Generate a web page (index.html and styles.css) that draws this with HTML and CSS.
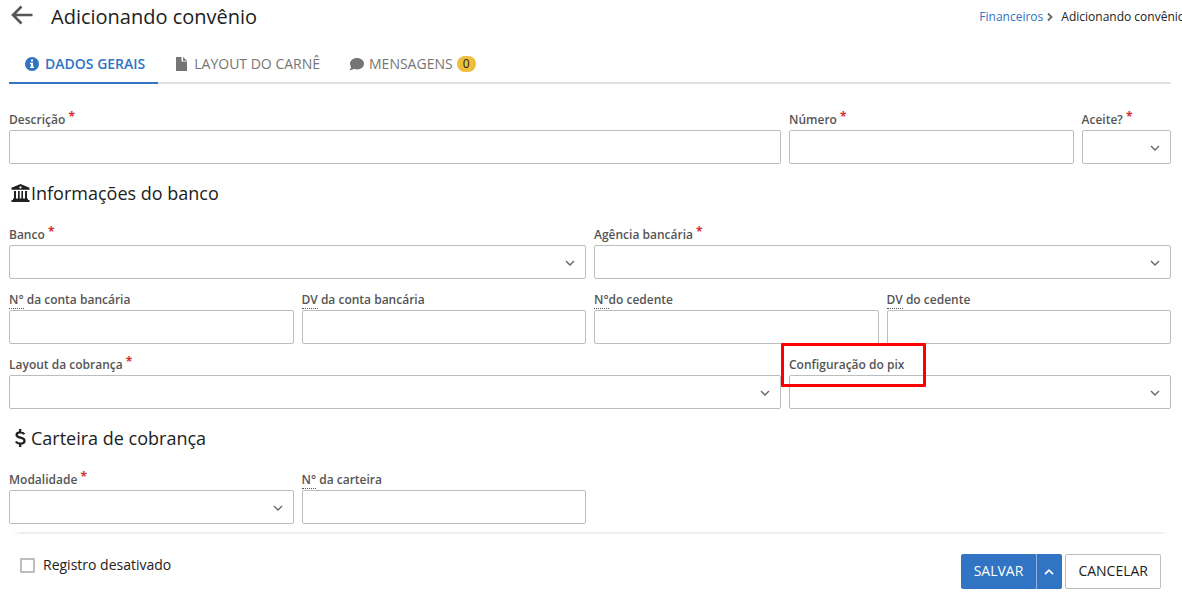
FILE: index.html
```html
<!DOCTYPE html>
<html lang="pt-BR">
<head>
<meta charset="utf-8">
<meta name="viewport" content="width=device-width, initial-scale=1">
<title>Adicionando convênio</title>
<link rel="stylesheet" href="styles.css">
</head>
<body>
<svg class="sprite" aria-hidden="true">
  <symbol id="chevron" viewBox="0 0 10 6"><path d="M1 1l4 4 4-4" fill="none" stroke="currentColor" stroke-width="1.400"/></symbol>
</svg>
<header class="page-header">
  <button class="back" type="button" aria-label="Voltar">
    <svg width="22" height="20" viewBox="0 0 22 20"><path d="M10.500 1.500L2 10l8.500 8.500M2 10h19.500" fill="none" stroke="currentColor" stroke-width="2.600"/></svg>
  </button>
  <h1 class="page-title">Adicionando convênio</h1>
  <nav class="breadcrumb" aria-label="Trilha">
    <a href="#">Financeiros</a>
    <svg width="6" height="10" viewBox="0 0 6 10"><path d="M1 1.500L4.500 5 1 8.500" fill="none" stroke="currentColor" stroke-width="1.800"/></svg>
    <span>Adicionando convênio</span>
  </nav>
</header>

<main class="content">
  <nav class="tabs">
    <button class="tab tab-active" type="button">
      <svg class="tab-icon" viewBox="0 0 16 16"><circle cx="7" cy="8" r="7" fill="currentColor"/><path d="M6 3.500h2v2H6zM5 6.800h3v3.700h1V12H5v-1.500h1V8.200H5z" fill="#fff"/></svg>
      <span>DADOS GERAIS</span>
    </button>
    <button class="tab" type="button">
      <svg class="tab-icon" viewBox="0 0 16 16"><path d="M2.500 1h5v4.500H13v9q0 .5-.5.500h-10q-.5 0-.5-.5v-13q0-.5.500-.5zM9 1l4 3.700H9z" fill="currentColor"/></svg>
      <span>LAYOUT DO CARNÊ</span>
    </button>
    <button class="tab" type="button">
      <svg class="tab-icon" viewBox="0 0 16 16"><path d="M8 2c4 0 7 2.500 7 5.700s-3 5.700-7 5.700c-1.100 0-2.200-.2-3.100-.6-.9.700-2.400 1.400-4 1.400-.3 0-.4-.3-.2-.6.600-.6 1.200-1.600 1.400-2.600C1.400 10.100 1 8.900 1 7.700 1 4.500 4 2 8 2z" fill="currentColor"/></svg>
      <span>MENSAGENS</span>
      <span class="badge">0</span>
    </button>
  </nav>

  <form class="form">
    <section class="grid">
      <div class="field span-8"><label for="descricao">Descrição <b class="req">*</b></label><input class="control" id="descricao" type="text"></div>
      <div class="field span-3"><label for="numero">Número <b class="req">*</b></label><input class="control" id="numero" type="text"></div>
      <div class="field span-1"><label for="aceite">Aceite? <b class="req">*</b></label><div class="select"><select class="control" id="aceite"><option></option></select><svg class="caret"><use href="#chevron"/></svg></div></div>
    </section>

    <h2 class="section-title">
      <svg class="section-icon" viewBox="0 0 22 20"><path d="M11.500 0L2.500 3.800v1.900h18V3.800zM4 16v-1.500h1V7h2v7.500h2V7h1.700v7.500h1.700V7H14v7.500h2V7h2v7.500h1V16h1.500v2h-18v-2z" fill="currentColor"/><circle cx="11.500" cy="3.400" r="1.100" fill="#fff"/></svg>
      <span>Informações do banco</span>
    </h2>

    <section class="grid">
      <div class="field span-6"><label for="banco">Banco <b class="req">*</b></label><div class="select"><select class="control" id="banco"><option></option></select><svg class="caret"><use href="#chevron"/></svg></div></div>
      <div class="field span-6"><label for="agencia">Agência bancária <b class="req">*</b></label><div class="select"><select class="control" id="agencia"><option></option></select><svg class="caret"><use href="#chevron"/></svg></div></div>
      <div class="field span-3"><label for="conta"><abbr>N°</abbr> da conta bancária</label><input class="control" id="conta" type="text"></div>
      <div class="field span-3"><label for="dv-conta"><abbr>DV</abbr> da conta bancária</label><input class="control" id="dv-conta" type="text"></div>
      <div class="field span-3"><label for="cedente"><abbr>N°</abbr>do cedente</label><input class="control" id="cedente" type="text"></div>
      <div class="field span-3"><label for="dv-cedente"><abbr>DV</abbr> do cedente</label><input class="control" id="dv-cedente" type="text"></div>
      <div class="field span-8"><label for="layout">Layout da cobrança <b class="req">*</b></label><div class="select"><select class="control" id="layout"><option></option></select><svg class="caret"><use href="#chevron"/></svg></div></div>
      <div class="field span-4 highlighted"><label for="pix">Configuração do pix</label><div class="select"><select class="control" id="pix"><option></option></select><svg class="caret"><use href="#chevron"/></svg></div></div>
    </section>

    <h2 class="section-title">
      <svg class="section-icon" viewBox="0 0 22 20"><path d="M15.300 5.300C14.600 4 13.200 3.400 11.300 3.400c-2.200 0-3.700 1-3.700 2.600 0 3.700 7.900 1.700 7.900 5.700 0 1.800-1.700 2.900-4.100 2.900-2.100 0-3.700-.7-4.600-2.100M11.200 0v3.400M11.200 14.500V18" fill="none" stroke="currentColor" stroke-width="2.300"/></svg>
      <span>Carteira de cobrança</span>
    </h2>

    <section class="grid">
      <div class="field span-3"><label for="modalidade">Modalidade <b class="req">*</b></label><div class="select"><select class="control" id="modalidade"><option></option></select><svg class="caret"><use href="#chevron"/></svg></div></div>
      <div class="field span-3"><label for="carteira"><abbr>N°</abbr> da carteira</label><input class="control" id="carteira" type="text"></div>
    </section>

    <footer class="actions">
      <label class="check"><input type="checkbox"><span>Registro desativado</span></label>
      <div class="buttons">
        <div class="split">
          <button class="btn btn-primary" type="button">SALVAR</button>
          <button class="btn btn-primary btn-more" type="button" aria-label="Mais opções"><svg width="10" height="6" viewBox="0 0 10 6"><path d="M1 5.200l4-4 4 4" fill="none" stroke="currentColor" stroke-width="1.700"/></svg></button>
        </div>
        <button class="btn btn-plain" type="button">CANCELAR</button>
      </div>
    </footer>
  </form>
</main>
</body>
</html>
```
FILE: styles.css
```css
* { box-sizing: border-box; }

body {
  margin: 0;
  overflow-x: hidden;
  background: #fff;
  color: #212121;
  font: 14px/20px "Open Sans", sans-serif;
}

button, input, select { font: inherit; color: inherit; }
button { cursor: pointer; }
.sprite { display: none; }

/* Header */
.page-header {
  display: flex;
  align-items: center;
  height: 34px;
  padding-left: 11px;
}
.back {
  display: flex;
  margin: 0 18px 4px 0;
  padding: 0;
  border: 0;
  background: none;
  color: #555;
}
.page-title {
  margin: 0;
  font-size: 20px;
  line-height: 28px;
  font-weight: 400;
}
.breadcrumb {
  display: flex;
  align-items: center;
  gap: 4px;
  margin: 0 -3px 0 auto;
  font-size: 12px;
  line-height: 16px;
  white-space: nowrap;
}
.breadcrumb a { color: #3174c3; text-decoration: none; }
.breadcrumb svg { color: #666; }
.breadcrumb span { margin-left: 4px; }

.content { padding: 12px 11px 0 9px; }

/* Tabs */
.tabs {
  display: flex;
  border-bottom: 2px solid #e0e0e4;
}
.tab {
  display: flex;
  align-items: center;
  gap: 4px;
  height: 38px;
  margin-bottom: -2px;
  padding: 0 13px 0 16px;
  border: 0;
  border-bottom: 2px solid transparent;
  background: none;
  color: #757575;
}
.tab-active {
  border-color: #3174c3;
  color: #3174c3;
  font-weight: 600;
}
.tab-icon { width: 16px; height: 16px; }
.badge {
  min-width: 19px;
  border-radius: 8px;
  background: #f0bd3b;
  color: #212121;
  font-size: 12px;
  line-height: 16px;
  text-align: center;
}

/* Form */
.form { padding-top: 28px; }
.grid {
  display: grid;
  grid-template-columns: repeat(12, minmax(0, 1fr));
  gap: 13px 8px;
}
.span-1 { grid-column: span 1; }
.span-3 { grid-column: span 3; }
.span-4 { grid-column: span 4; }
.span-6 { grid-column: span 6; }
.span-8 { grid-column: span 8; }

.field {
  display: flex;
  flex-direction: column;
  gap: 2px;
}
.field label {
  height: 16px;
  color: #555;
  font-size: 12px;
  line-height: 16px;
  font-weight: 600;
  white-space: nowrap;
}
.field abbr {
  border-bottom: 1px dotted #555;
  text-decoration: none;
}
.req {
  color: #d32f2f;
  font-weight: 700;
  line-height: 0;
  vertical-align: 3px;
}
.control {
  width: 100%;
  height: 34px;
  padding: 0 8px;
  border: 1px solid #bdbdbd;
  border-radius: 2px;
  background: #fff;
  appearance: none;
}
.select { display: grid; align-items: center; }
.select > * { grid-area: 1 / 1; }
.caret {
  width: 10px;
  height: 6px;
  margin: 2px 11px 0 0;
  justify-self: end;
  color: #666;
  pointer-events: none;
}

/* Marker drawn over the field */
.highlighted { position: relative; }
.highlighted::after {
  content: "";
  box-sizing: border-box;
  position: absolute;
  top: -14px;
  left: -8px;
  width: 145px;
  height: 44px;
  border: 3px solid #f00;
  border-radius: 1px;
  pointer-events: none;
}

.section-title {
  display: flex;
  align-items: center;
  margin: 16px 0 20px;
  font-size: 18px;
  line-height: 27px;
  font-weight: 400;
}
.section-icon { width: 22px; height: 20px; }

/* Footer */
.actions {
  display: flex;
  justify-content: space-between;
  align-items: flex-start;
  margin-top: 8px;
  padding: 20px 10px 14px 11px;
  border-top: 2px solid;
  border-image: linear-gradient(to right, transparent 3px, #eee 14px, #eee calc(100% - 14px), transparent calc(100% - 3px)) 1;
}
.check {
  display: flex;
  align-items: center;
  gap: 8px;
  padding-top: 1px;
}
.check input {
  width: 15px;
  height: 15px;
  margin: 0;
  border: 2px solid #bdbdbd;
  border-radius: 1px;
  appearance: none;
}
.buttons { display: flex; gap: 3px; }
.split { display: flex; }
.btn {
  height: 35px;
  padding: 0 12px 2px;
  border: 1px solid #bdbdbd;
  border-radius: 2px;
  background: #fff;
}
.btn-primary {
  border-color: #3174c3;
  border-radius: 2px 0 0 2px;
  background: #3174c3;
  color: #fff;
}
.btn-more {
  display: flex;
  align-items: center;
  padding: 0 7px;
  border-left-color: #8fb5e0;
  border-radius: 0 2px 2px 0;
}
```
